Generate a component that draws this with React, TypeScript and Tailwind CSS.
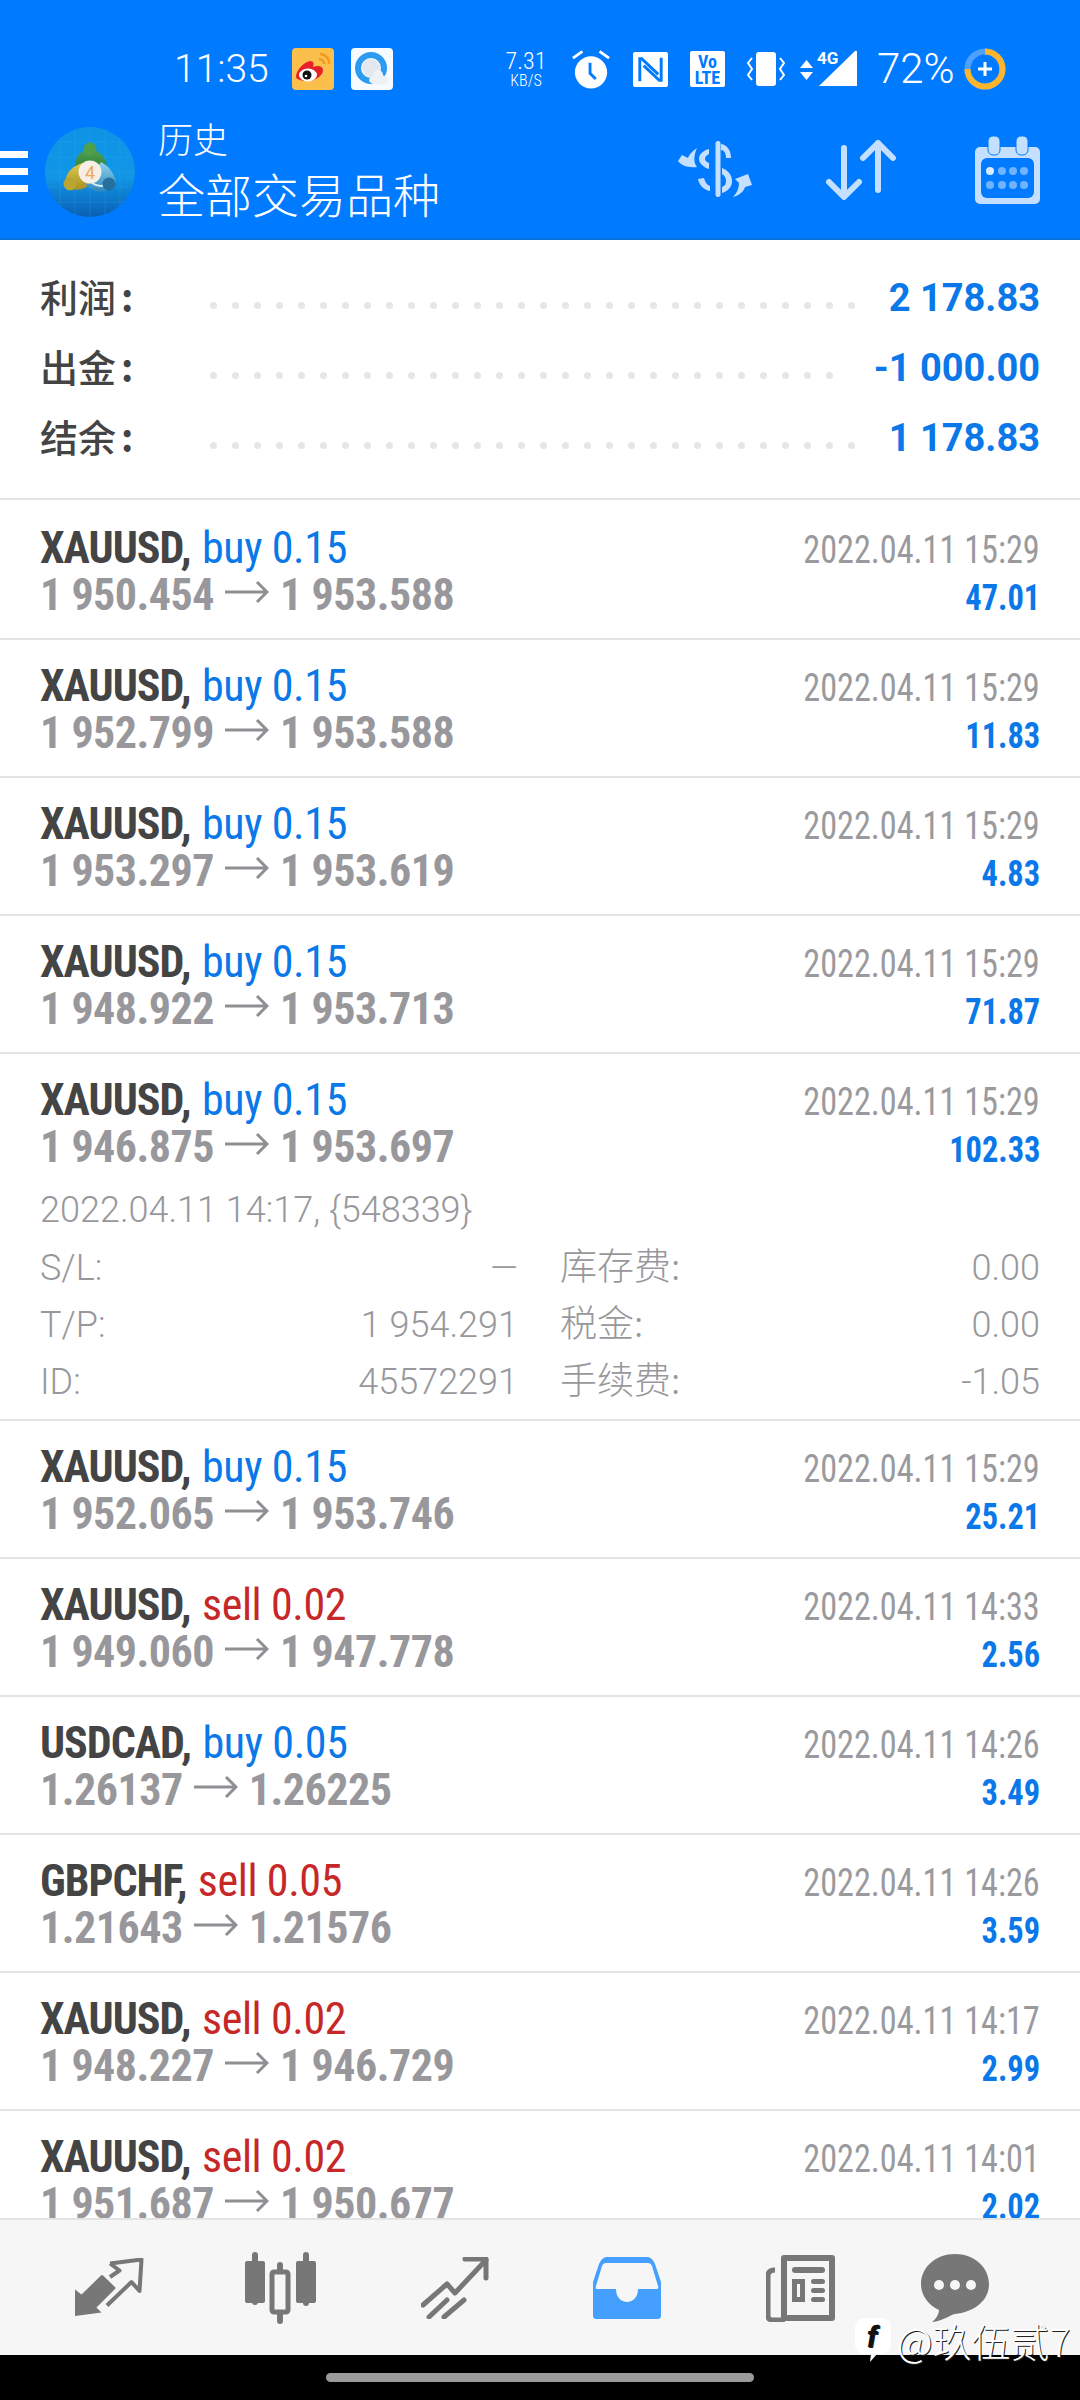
import type { ReactNode } from 'react';

type Deal = {
  symbol: string;
  side: 'buy' | 'sell';
  lots: string;
  open: string;
  close: string;
  time: string;
  profit: string;
  details?: boolean;
};

const deals: Deal[] = [
  { symbol: 'XAUUSD', side: 'buy', lots: '0.15', open: '1 950.454', close: '1 953.588', time: '2022.04.11 15:29', profit: '47.01' },
  { symbol: 'XAUUSD', side: 'buy', lots: '0.15', open: '1 952.799', close: '1 953.588', time: '2022.04.11 15:29', profit: '11.83' },
  { symbol: 'XAUUSD', side: 'buy', lots: '0.15', open: '1 953.297', close: '1 953.619', time: '2022.04.11 15:29', profit: '4.83' },
  { symbol: 'XAUUSD', side: 'buy', lots: '0.15', open: '1 948.922', close: '1 953.713', time: '2022.04.11 15:29', profit: '71.87' },
  { symbol: 'XAUUSD', side: 'buy', lots: '0.15', open: '1 946.875', close: '1 953.697', time: '2022.04.11 15:29', profit: '102.33', details: true },
  { symbol: 'XAUUSD', side: 'buy', lots: '0.15', open: '1 952.065', close: '1 953.746', time: '2022.04.11 15:29', profit: '25.21' },
  { symbol: 'XAUUSD', side: 'sell', lots: '0.02', open: '1 949.060', close: '1 947.778', time: '2022.04.11 14:33', profit: '2.56' },
  { symbol: 'USDCAD', side: 'buy', lots: '0.05', open: '1.26137', close: '1.26225', time: '2022.04.11 14:26', profit: '3.49' },
  { symbol: 'GBPCHF', side: 'sell', lots: '0.05', open: '1.21643', close: '1.21576', time: '2022.04.11 14:26', profit: '3.59' },
  { symbol: 'XAUUSD', side: 'sell', lots: '0.02', open: '1 948.227', close: '1 946.729', time: '2022.04.11 14:17', profit: '2.99' },
  { symbol: 'XAUUSD', side: 'sell', lots: '0.02', open: '1 951.687', close: '1 950.677', time: '2022.04.11 14:01', profit: '2.02' },
];

const WeiboIcon = () => (
  <svg width="42" height="42" viewBox="0 0 42 42">
    <rect width="42" height="42" rx="4" fill="#fbc04c" />
    <path d="M28 6a9 9 0 0 1 9 10M27 11a5 5 0 0 1 5 5" stroke="#f39a1e" strokeWidth="2.4" fill="none" />
    <path d="M4 29c0-7 8-15 14-16 4 0 4 3 3 6 5-2 10-1 10 3 0 6-8 11-15 11-7 0-12-2-12-4z" fill="#e6212a" />
    <ellipse cx="16" cy="27" rx="9" ry="6.5" fill="#fff" />
    <circle cx="15" cy="27" r="4.5" fill="#111" />
    <circle cx="14" cy="28" r="1.3" fill="#fff" />
  </svg>
);

const QQBrowserIcon = () => (
  <svg width="42" height="42" viewBox="0 0 42 42">
    <rect width="42" height="42" rx="4" fill="#f6fbff" />
    <circle cx="20" cy="20" r="13" fill="none" stroke="#2a9bf0" strokeWidth="6" />
    <circle cx="20" cy="20" r="9" fill="#e4e8ee" />
    <ellipse cx="28" cy="32" rx="10" ry="5" fill="#eef2f7" />
    <circle cx="27" cy="27" r="5" fill="#eef2f7" />
  </svg>
);

const StatusIcons = () => (
  <div className="flex items-center">
    <div className="ml-[2px] flex w-[42px] flex-col items-center font-[Roboto,sans-serif] font-light font-stretch-condensed text-white">
      <span className="text-[24px] leading-[23px]">7.31</span>
      <span className="text-[16px] leading-[15px]">KB/S</span>
    </div>
    <svg className="ml-[25px]" width="38" height="41" viewBox="0 0 40 42" fill="#fff">
      <circle cx="20" cy="24" r="17" />
      <path d="M19 14v11l6 6" stroke="#007aff" strokeWidth="3" fill="none" />
      <path d="M1 9l10-7M39 9L29 2" stroke="#fff" strokeWidth="3" />
    </svg>
    <svg className="ml-[23px]" width="35" height="35" viewBox="0 0 36 36">
      <rect width="36" height="36" rx="2" fill="#fff" />
      <path d="M7 30V7h2l17 16M29 6v23h-2L11 14" stroke="#007aff" strokeWidth="3" fill="none" />
    </svg>
    <div className="ml-[22px] flex h-[36px] w-[35px] flex-col items-center justify-center rounded-[2px] bg-white font-[Roboto,sans-serif] font-bold font-stretch-condensed text-[#007aff]">
      <span className="text-[18px] leading-[17px]">Vo</span>
      <span className="text-[18px] leading-[16px]">LTE</span>
    </div>
    <svg className="ml-[22px]" width="38" height="36" viewBox="0 0 38 36">
      <rect x="9" y="1" width="20" height="34" rx="3" fill="#fff" />
      <path d="M5 7L1 12l4 6-4 6 4 5M33 7l4 5-4 6 4 6-4 5" stroke="#fff" strokeWidth="2" fill="none" />
    </svg>
    <svg className="ml-[15px]" width="57" height="38" viewBox="0 0 57 38" fill="#fff">
      <path d="M6.5 10l6.5 8H0zM6.5 30L0 22h13z" />
      <path d="M19 36L55 1q2-1 2 1v34z" />
      <text x="17" y="14" fontSize="17" fontWeight="700" fontFamily="Roboto, sans-serif">4G</text>
    </svg>
  </div>
);

// Three lobed traders around the numbered badge, on a tiled blue disc
const Logo = () => (
  <svg width="90" height="90" viewBox="0 0 90 90">
    <defs>
      <linearGradient id="mt4bg" x1="0" y1="0" x2="0" y2="1">
        <stop offset="0%" stopColor="#0d93e4" />
        <stop offset="55%" stopColor="#1197e6" />
        <stop offset="100%" stopColor="#0a5fb4" />
      </linearGradient>
      <linearGradient id="mt4green" x1="0" y1="0" x2="0" y2="1">
        <stop offset="0%" stopColor="#4f9f4c" />
        <stop offset="100%" stopColor="#2f7e3a" />
      </linearGradient>
      <linearGradient id="mt4yellow" x1="0" y1="0" x2="0" y2="1">
        <stop offset="0%" stopColor="#d9c94c" />
        <stop offset="100%" stopColor="#a89026" />
      </linearGradient>
      <linearGradient id="mt4blue" x1="0" y1="0" x2="0" y2="1">
        <stop offset="0%" stopColor="#8fd2f2" />
        <stop offset="100%" stopColor="#2f88bb" />
      </linearGradient>
    </defs>
    <circle cx="45" cy="45" r="45" fill="url(#mt4bg)" />
    <path d="M15 10v70M30 2v86M45 0v90M60 2v86M75 10v70M10 15h70M2 30h86M0 45h90M2 60h86M10 75h70" stroke="#3fb0ee" strokeWidth="0.6" opacity="0.35" />
    <path d="M30 40c0-11 6-17 15-17s15 6 17 17L45 45z" fill="url(#mt4green)" />
    <circle cx="45" cy="22" r="6.5" fill="#4f9f4c" />
    <path d="M38 36c-9 2-17 9-18 19l7 7c7 2 13 0 18-5z" fill="url(#mt4yellow)" />
    <circle cx="25" cy="57" r="6.5" fill="#b9a52f" />
    <path d="M56 35c8 4 14 12 15 21-8 11-22 11-30 2z" fill="url(#mt4blue)" />
    <path d="M47 56c6 4 12 4 17-1" stroke="#d3eefb" strokeWidth="2" fill="none" />
    <circle cx="64" cy="57" r="6.5" fill="#246f9d" />
    <circle cx="45" cy="45" r="11.5" fill="#f6efe6" />
    <text x="45" y="51.5" textAnchor="middle" fontSize="18" fontFamily="Roboto, sans-serif" fill="#f0a95a">4</text>
  </svg>
);

const SwapIcon = () => (
  <svg width="75" height="57" viewBox="18 16 75 57" fill="#c5e0ff">
    <rect x="55.5" y="16" width="5" height="56" rx="2.5" />
    <path d="M61 19C67 20 71 25 71 33L66 33C66 28 64 25 61 25Z" />
    <path d="M49 24C42 26 39 30 39 34C39 38 43 42 49 44L49 38C46 37 45 35 45 34C45 32 46 31 49 29Z" />
    <path d="M62 43C68 45 72 50 72 56C72 62 68 66 62 68L62 62C65 61 66 59 66 56C66 53 65 51 62 49Z" />
    <path d="M38 54L44 53C45 57 47 60 50 61L50 66C44 65 39 60 38 54Z" />
    <path d="M37 23C32 26 29 30 28 33L22 30L18 36C21 40 27 43 37 42C33 37 34 30 37 23Z" />
    <path d="M73 72C80 70 84 66 85 62L92 60L88 49L75 54L79 58C79 63 77 68 73 72Z" />
  </svg>
);

const SortIcon = () => (
  <svg width="72" height="60" viewBox="0 0 72 60" fill="none" stroke="#c5e0ff" strokeWidth="6" strokeLinecap="round" strokeLinejoin="round">
    <path d="M18 8v48M3 42l15 15 15-15" />
    <path d="M52 50V3M37 18L52 3l15 15" />
  </svg>
);

const CalendarIcon = () => (
  <svg width="65" height="68" viewBox="0 0 65 68">
    <rect x="0" y="11" width="65" height="57" rx="5" fill="#c5e0ff" />
    <rect x="13" y="0" width="12" height="19" rx="5" fill="#c5e0ff" stroke="#007aff" strokeWidth="1" />
    <rect x="41" y="0" width="12" height="19" rx="5" fill="#c5e0ff" stroke="#007aff" strokeWidth="1" />
    <rect x="6" y="22" width="53" height="40" rx="6" fill="#007aff" />
    <g fill="#71b3ff">
      <circle cx="15" cy="35" r="4" fill="#d8ebff" />
      <circle cx="27" cy="35" r="4" />
      <circle cx="38" cy="35" r="4" />
      <circle cx="49" cy="35" r="4" />
      <circle cx="15" cy="49" r="4" />
      <circle cx="27" cy="49" r="4" />
      <circle cx="38" cy="49" r="4" />
      <circle cx="49" cy="49" r="4" />
    </g>
  </svg>
);

const Header = () => (
  <header className="h-[240px] shrink-0 border-b-[2px] border-[#0a72dc] bg-[#007aff] text-white">
    <div className="flex h-[120px] items-start pl-[174px] pt-[48px]">
      <span className="w-[118px] font-[Roboto,sans-serif] text-[39px] font-light leading-[42px]">11:35</span>
      <WeiboIcon />
      <div className="ml-[17px]"><QQBrowserIcon /></div>
      <div className="ml-[110px] flex items-center">
        <StatusIcons />
        <span className="ml-[20px] w-[76px] whitespace-nowrap font-[Roboto,sans-serif] text-[42px] font-light leading-[42px]">72%</span>
        <svg className="ml-[11px]" width="42" height="42" viewBox="0 0 42 42">
          <circle cx="21" cy="21" r="17.5" fill="none" stroke="#4ea1ff" strokeWidth="6" />
          <path d="M21 3.5a17.5 17.5 0 1 1-17.5 17.5" fill="none" stroke="#fdb52e" strokeWidth="6" />
          <path d="M21 14v14M14 21h14" stroke="#fff" strokeWidth="3" />
        </svg>
      </div>
    </div>
    <div className="flex h-[118px] items-center pb-[15px]">
      <div className="flex h-[41px] w-[28px] flex-col justify-between">
        <div className="h-[7px] bg-white" />
        <div className="h-[7px] bg-white" />
        <div className="h-[7px] bg-white" />
      </div>
      <div className="ml-[17px]"><Logo /></div>
      <div className="-mt-[7px] ml-[23px] flex w-[282px] flex-col font-['Noto_Sans_CJK_SC',sans-serif] font-light">
        <span className="text-[35px] leading-[46px]">历史</span>
        <span className="mt-[3px] whitespace-nowrap text-[47px] leading-[58px]">全部交易品种</span>
      </div>
      <div className="mb-[4px] ml-[238px] flex items-center">
        <SwapIcon />
        <div className="ml-[73px]"><SortIcon /></div>
        <div className="ml-[77px]"><CalendarIcon /></div>
      </div>
    </div>
  </header>
);

const SummaryRow = ({ label, value, dots }: { label: string; value: string; dots: number }) => (
  <div className="flex h-[70px] items-center">
    <span className="-mt-[6px] flex w-[170px] items-center font-['Noto_Sans_CJK_SC',sans-serif] text-[38px] font-medium text-[#444444]">
      {label}
      <span className="ml-[5px] font-bold">:</span>
    </span>
    <div className="mt-[14px] flex gap-[15px]">
      {Array.from({ length: dots }).map((_, i) => (
        <span key={i} className="h-[7px] w-[7px] rounded-full bg-[#e6e6e6]" />
      ))}
    </div>
    <span className="ml-auto font-[Roboto,sans-serif] text-[38px] font-bold text-[#0a78e8]">{value}</span>
  </div>
);

const Cond = ({ children, className }: { children: ReactNode; className?: string }) => (
  <span className={`font-[Roboto,sans-serif] font-stretch-condensed ${className ?? ''}`}>{children}</span>
);

const DetailCell = ({ label, value, cjk }: { label: string; value: string; cjk?: boolean }) => (
  <div className="flex justify-between">
    <span className={cjk ? "-mt-[4px] font-['Noto_Sans_CJK_SC',sans-serif] text-[37px] font-light" : ''}>{label}</span>
    <span>{value}</span>
  </div>
);

const DealRow = ({ deal }: { deal: Deal }) => (
  <div className={`shrink-0 border-b-[2px] border-[#e4e4e4] px-[40px] pt-[20px] first:pt-[22px] ${deal.details ? 'pb-[8px]' : 'pb-[19px]'}`}>
    <div className="flex h-[49px] items-baseline justify-between">
      <div className="whitespace-nowrap text-[44px] leading-[48px]">
        <Cond className="font-bold tracking-[-1px] text-[#444444]">{deal.symbol},</Cond>{' '}
        <Cond className={`tracking-[-0.4px] ${deal.side === 'buy' ? 'text-[#0a78e8]' : 'text-[#c62828]'}`}>
          {deal.side} {deal.lots}
        </Cond>
      </div>
      <Cond className="origin-right scale-x-90 text-[38px] leading-[48px] text-[#9a9a9e]">{deal.time}</Cond>
    </div>
    <div className="flex h-[48px] items-baseline justify-between">
      <div className="flex items-center text-[44px] leading-[48px]">
        <Cond className="font-bold tracking-[-0.5px] text-[#98989c]">{deal.open}</Cond>
        <svg className="mx-[11px] -mt-[6px]" width="44" height="24" viewBox="0 0 44 24" fill="none" stroke="#8f8f93" strokeWidth="3">
          <path d="M0 12h42M32 2l10 10-10 10" />
        </svg>
        <Cond className="font-bold tracking-[-0.5px] text-[#98989c]">{deal.close}</Cond>
      </div>
      <Cond className="origin-right scale-x-90 text-[36px] font-bold leading-[48px] text-[#0a78e8]">{deal.profit}</Cond>
    </div>
    {deal.details && (
      <div className="mt-[12px] font-[Roboto,sans-serif] text-[36px] font-light text-[#98989c]">
        <div className="h-[57px] leading-[54px]">2022.04.11 14:17, {'{548339}'}</div>
        <div className="grid grid-cols-[478px_480px] gap-x-[42px] leading-[57px]">
          <DetailCell label="S/L:" value="—" />
          <DetailCell label="库存费:" value="0.00" cjk />
          <DetailCell label="T/P:" value="1 954.291" />
          <DetailCell label="税金:" value="0.00" cjk />
          <DetailCell label="ID:" value="45572291" />
          <DetailCell label="手续费:" value="-1.05" cjk />
        </div>
      </div>
    )}
  </div>
);

const TradeIcon = () => (
  <svg width="69" height="59" viewBox="15 17 69 59" fill="#777777">
    <path d="M15 75V48.5L21.5 53.5L41 34.500Q42 33.500 43 34.500L55 46Q56 47 55 48L36.500 66.500L41.500 71.500Z" />
    <path d="M50 22.500L81.500 18.500L79.500 50L71.500 41L47 64.500M50 22.500L59.500 29.500L50 36" fill="none" stroke="#777777" strokeWidth="4" strokeLinejoin="round" />
  </svg>
);

const CandlesIcon = () => (
  <svg width="72" height="72" viewBox="0 0 72 72" fill="#777777">
    <rect x="0" y="9" width="20" height="42" rx="2" />
    <rect x="7" y="0" width="6" height="53" rx="3" />
    <rect x="51" y="9" width="20" height="42" rx="2" />
    <rect x="58" y="0" width="6" height="54" rx="3" />
    <rect x="27" y="20" width="16" height="40" rx="2" fill="none" stroke="#777777" strokeWidth="5" />
    <rect x="32" y="10" width="6" height="11" rx="3" />
    <rect x="32" y="59" width="6" height="13" rx="3" />
  </svg>
);

const SignalsIcon = () => (
  <svg width="68" height="62" viewBox="0 0 68 62" fill="none" stroke="#777777" strokeWidth="5" strokeLinecap="round" strokeLinejoin="round">
    <path d="M2 48L26 27l8 9 31-33" />
    <path d="M44 2h21v19" />
    <path d="M8 60l18-17M23 60l20-17" />
  </svg>
);

const InboxIcon = () => (
  <svg width="68" height="62" viewBox="0 0 68 62">
    <path d="M14 0h40c4 0 6 3 8 7l6 18v33c0 3-1 4-4 4H4c-3 0-4-1-4-4V25L6 7c2-4 4-7 8-7z" fill="#459fff" />
    <path d="M13 6h42c2 0 3 1 4 3l6 20c1 2 0 3-2 3H45c0 8-5 13-11 13s-11-5-11-13H5c-2 0-3-1-2-3L9 9c1-2 2-3 4-3z" fill="#f6f6f6" />
  </svg>
);

const NewsIcon = () => (
  <svg width="70" height="68" viewBox="0 0 70 68" fill="#777777">
    <path d="M18 4h48v60H18z" fill="none" stroke="#777777" strokeWidth="6" strokeLinejoin="round" />
    <path d="M9 16C4 16 2 18 2 22v40c0 3 2 4 5 4h12" fill="none" stroke="#777777" strokeWidth="5" />
    <rect x="26" y="13" width="33" height="6" rx="3" />
    <path d="M26 25h13v23H26zm5 5v13h3V30z" fill="#777777" fillRule="evenodd" />
    <rect x="45" y="25" width="14" height="5" rx="2.5" />
    <rect x="45" y="34" width="14" height="5" rx="2.5" />
    <rect x="45" y="43" width="14" height="5" rx="2.5" />
  </svg>
);

const ChatIcon = () => (
  <svg width="68" height="68" viewBox="0 0 68 68">
    <path d="M34 0c19 0 34 13 34 30S53 58 34 60c-5 1-12 7-23 8 4-3 7-8 7-12C7 51 0 41 0 30 0 13 15 0 34 0z" fill="#777777" />
    <circle cx="18" cy="31" r="5" fill="#f6f6f6" />
    <circle cx="34" cy="31" r="5" fill="#f6f6f6" />
    <circle cx="50" cy="31" r="5" fill="#f6f6f6" />
  </svg>
);

const Footer = () => (
  <footer className="relative shrink-0">
    <div className="flex h-[137px] items-center border-t-[2px] border-[#e4e4e4] bg-[#f6f6f6] pl-[75px]">
      <TradeIcon />
      <div className="ml-[101px]"><CandlesIcon /></div>
      <div className="ml-[104px]"><SignalsIcon /></div>
      <div className="ml-[104px]"><InboxIcon /></div>
      <div className="ml-[105px]"><NewsIcon /></div>
      <div className="ml-[85px]"><ChatIcon /></div>
    </div>
    <div className="flex h-[45px] items-center justify-center bg-black">
      <div className="h-[9px] w-[428px] rounded-full bg-[#9b9b9b]" />
    </div>
    {/* reposted-by tag that sits over the nav bar */}
    <div className="absolute left-[855px] top-[100px] flex items-center text-white [text-shadow:1px_1px_0_#222]">
      <svg width="36" height="44" viewBox="0 0 36 44">
        <path d="M10 0h16c6 0 10 4 10 10v16c0 6-4 10-10 10H22l-7 8 1-8h-6C4 36 0 32 0 26V10C0 4 4 0 10 0z" fill="#fff" />
        <text x="17" y="29" textAnchor="middle" fontSize="30" fontWeight="700" fontStyle="italic" fontFamily="Roboto, sans-serif" fill="#111">f</text>
      </svg>
      <span className="ml-[6px] font-['Noto_Sans_CJK_SC',sans-serif] text-[39px] font-light leading-[40px]">@玖伍贰7</span>
    </div>
  </footer>
);

export default function App() {
  return (
    <div className="flex h-[2400px] w-[1080px] flex-col overflow-hidden bg-white">
      <Header />
      <section className="shrink-0 border-b-[2px] border-[#e4e4e4] px-[40px] pb-[25px] pt-[23px]">
        <SummaryRow label="利润" value="2 178.83" dots={30} />
        <SummaryRow label="出金" value="-1 000.00" dots={29} />
        <SummaryRow label="结余" value="1 178.83" dots={30} />
      </section>
      <main className="flex min-h-0 flex-1 flex-col overflow-hidden">
        {deals.map((deal, i) => (
          <DealRow key={i} deal={deal} />
        ))}
      </main>
      <Footer />
    </div>
  );
}
